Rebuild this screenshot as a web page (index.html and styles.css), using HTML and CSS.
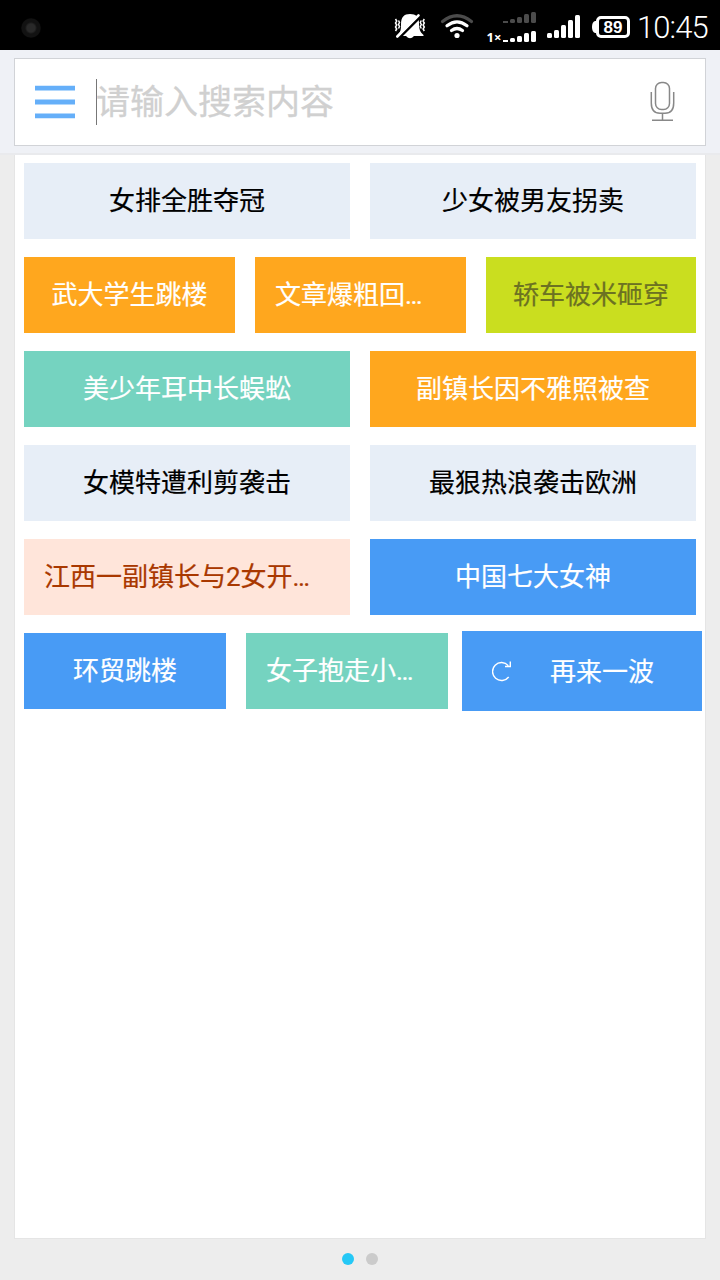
FILE: index.html
```html
<!DOCTYPE html>
<html lang="zh-CN">
<head>
<meta charset="utf-8">
<title>搜索</title>
<link rel="stylesheet" href="styles.css">
</head>
<body>
<div class="screen">
  <header class="status">
    <span class="camera"></span>
    <svg class="status-icons" width="252" height="50" viewBox="380 0 252 50">
      <path fill="#fff" d="M397 36C401 32 401 29 401 24C401 17 404 14 410 14C416 14 419 17 419 23C419 29 420 32 423.500 35V36Z"/>
      <path fill="#fff" d="M406 36H414Q410 40.500 406 36Z"/>
      <path stroke="#000" stroke-width="2.600" d="M397.500 39.500L423 14"/>
      <path stroke="#fff" stroke-width="2.600" stroke-linecap="round" d="M397.300 36.500L418.500 15.300"/>
      <path fill="none" stroke="#fff" stroke-width="1.500" d="M395.500 19l1.200 2-1.200 2 1.200 2-1.200 2 1.200 2-1.200 2M398.500 20.500l1 2-1 2 1 2-1 2M424.300 19l-1.200 2 1.200 2-1.200 2 1.200 2-1.200 2 1.200 2M421.300 20.500l-1 2 1 2-1 2 1 2"/>
      <g fill="none" stroke-linecap="round" stroke-width="3.200">
        <path stroke="#4b4b4b" d="M442.500 21.500Q457 10 471.500 21.500"/>
        <path stroke="#fff" d="M447 25.800Q457 18 467 25.800M451.500 30.500Q457 26.500 462.500 30.500"/>
      </g>
      <circle fill="#fff" cx="457" cy="35.500" r="2.600"/>
      <g fill="#4b4b4b">
        <rect x="503" y="21" width="5" height="2"/><rect x="510" y="19" width="5" height="4" rx="1.500"/><rect x="517" y="17" width="5" height="6" rx="1.500"/><rect x="524" y="14" width="5" height="9" rx="1.500"/><rect x="531" y="12" width="5" height="11" rx="1.500"/>
      </g>
      <g fill="#fff">
        <rect x="503" y="40" width="5" height="2"/><rect x="510" y="38" width="5" height="4" rx="1.500"/><rect x="517" y="36" width="5" height="6" rx="1.500"/><rect x="524" y="33" width="5" height="9" rx="1.500"/><rect x="531" y="31" width="5" height="11" rx="1.500"/>
        <rect x="547" y="33" width="5" height="5" rx="1.500"/><rect x="554" y="30" width="5" height="8" rx="1.500"/><rect x="561" y="25" width="5" height="13" rx="1.500"/><rect x="568" y="20" width="5" height="18" rx="1.500"/><rect x="575" y="15" width="5" height="23" rx="1.500"/>
        <path d="M597 21H595Q592 22 592 27Q592 32 595 33H597Z"/>
      </g>
      <rect x="597.500" y="17.500" width="31" height="19" rx="3.500" fill="none" stroke="#fff" stroke-width="3"/>
      <text class="network" x="486.500" y="42">1×</text>
      <text class="charge" x="613" y="33" text-anchor="middle">89</text>
    </svg>
    <span class="time">10:45</span>
  </header>

  <div class="search-area">
    <div class="search-box">
      <svg class="menu" width="40" height="34" viewBox="0 0 40 34"><path d="M0 3.200H40M0 17H40M0 30.800H40" stroke="#65aff9" stroke-width="4.800"/></svg>
      <span class="caret"></span>
      <span class="placeholder">请输入搜索内容</span>
      <svg class="mic" width="26" height="42" viewBox="0 0 26 42" fill="none" stroke="#888" stroke-width="1.500">
        <rect x="5.500" y="2.500" width="14" height="27" rx="6"/>
        <path d="M1.300 12V23Q1.300 33.300 10 33.300H15Q23.700 33.300 23.700 23V12M12.500 33.500V40M2 40.200H23"/>
      </svg>
    </div>
  </div>

  <main class="card">
    <div class="row"><div class="tile pale">女排全胜夺冠</div><div class="tile pale">少女被男友拐卖</div></div>
    <div class="row thirds"><div class="tile orange">武大学生跳楼</div><div class="tile orange clipped">文章爆粗回…</div><div class="tile lime">轿车被米砸穿</div></div>
    <div class="row"><div class="tile teal">美少年耳中长蜈蚣</div><div class="tile orange">副镇长因不雅照被查</div></div>
    <div class="row"><div class="tile pale">女模特遭利剪袭击</div><div class="tile pale">最狠热浪袭击欧洲</div></div>
    <div class="row"><div class="tile peach clipped">江西一副镇长与2女开…</div><div class="tile blue">中国七大女神</div></div>
    <div class="row last">
      <div class="tile blue">环贸跳楼</div><div class="tile teal clipped">女子抱走小…</div>
      <div class="tile blue refresh">
        <svg width="22" height="22" viewBox="0 0 22 22" fill="none" stroke="#fff" stroke-width="1.400"><path d="M16.700 17A9 9 0 1 1 16.300 5.600M18.300 1.500V6.500H13"/></svg>
        <span>再来一波</span>
      </div>
    </div>
  </main>

  <footer class="pager"><span class="dot active"></span><span class="dot"></span></footer>
</div>
</body>
</html>
```
FILE: styles.css
```css
* { box-sizing: border-box; }
body {
  margin: 0;
  background: #ededed;
  font-family: Roboto, "Noto Sans CJK SC", sans-serif;
}
.screen {
  display: flex;
  flex-direction: column;
  width: 720px;
  height: 1280px;
  overflow: hidden;
}
.status {
  display: flex;
  align-items: center;
  flex: none;
  height: 50px;
  padding-left: 21px;
  background: #000;
  color: #fff;
}
.camera {
  width: 20px;
  height: 20px;
  margin-top: 6px;
  border-radius: 50%;
  background: radial-gradient(circle, #292929 0 4px, #121212 6px 9px, #080808 10px);
}
.status-icons { margin-left: 339px; }
.network { fill: #fff; font: bold 13px "Noto Sans", sans-serif; }
.charge { fill: #fff; font: bold 17px "Liberation Sans", sans-serif; }
.time {
  margin: 6px 0 0 5px;
  font-size: 31px;
  font-weight: 300;
  line-height: 40px;
  letter-spacing: -0.900px;
}
.search-area {
  flex: none;
  height: 105px;
  padding: 8px 14px;
  background: #eff1f6;
  border-bottom: 2px solid #e9eaed;
}
.search-box {
  display: flex;
  align-items: center;
  height: 88px;
  padding: 0 29px 0 20px;
  border: 1px solid #d1d3d7;
  background: #fff;
}
.caret {
  width: 1px;
  height: 46px;
  margin-left: 21px;
  background: #777;
}
.placeholder {
  flex: 1;
  margin-left: -1px;
  color: #d0d0d0;
  font-size: 34px;
  line-height: 48px;
  -webkit-text-stroke: 0.300px currentColor;
}
.mic { margin-bottom: 2px; }
.card {
  display: flex;
  flex-direction: column;
  gap: 18px;
  flex: none;
  height: 1084px;
  margin: 0 14px;
  padding: 8px 9px 0;
  border: 1px solid #e5e5e5;
  border-top: 0;
  background: #fff;
}
.row {
  display: grid;
  grid-template-columns: 326px 326px;
  gap: 20px;
  height: 76px;
}
.thirds { grid-template-columns: 211px 211px 210px; }
.last { grid-template-columns: 202px 202px 240px; }
.tile {
  display: flex;
  align-items: center;
  justify-content: center;
  font-size: 26px;
  line-height: 38px;
  white-space: nowrap;
  -webkit-text-stroke: 0.200px currentColor;
}
.clipped { justify-content: flex-start; padding-left: 20px; }
.pale { background: #e7eef7; color: #000; }
.orange { background: #ffa71e; color: #fff; }
.lime { background: #cade1f; color: #6c7222; }
.teal { background: #75d3c0; color: #fff; }
.peach { background: #ffe5da; color: #a93800; }
.blue { background: #489bf5; color: #fff; }
.refresh {
  justify-content: flex-start;
  gap: 36px;
  height: 80px;
  margin: -2px 0 -2px -6px;
  padding: 0 0 0 30px;
  width: 240px;
}
.refresh span { padding-top: 2px; }
.pager {
  display: flex;
  justify-content: center;
  gap: 12px;
  padding-top: 14px;
}
.dot { width: 12px; height: 12px; border-radius: 50%; background: #cbcbcb; }
.active { background: #25c8f6; }
```
